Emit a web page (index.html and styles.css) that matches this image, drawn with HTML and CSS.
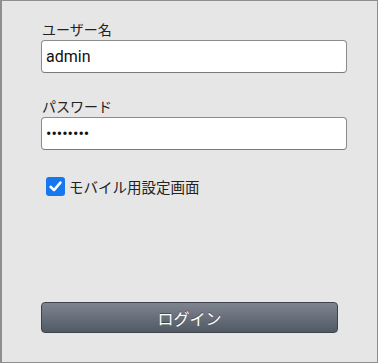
FILE: index.html
```html
<!DOCTYPE html>
<html lang="ja">
<head>
<meta charset="utf-8">
<link rel="stylesheet" href="styles.css">
</head>
<body>
<div class="page">
  <form class="login">
    <label class="field-label" for="user">ユーザー名</label>
    <input class="field" id="user" type="text" value="admin">
    <label class="field-label second" for="pass">パスワード</label>
    <input class="field" id="pass" type="password" value="password">
    <label class="check-row">
      <span class="check" role="checkbox" aria-checked="true">
        <svg width="19" height="19" viewBox="0 0 19 19"><path d="M4.6 9.8 L8 13.1 L14.4 5.6" fill="none" stroke="#fff" stroke-width="2.6" stroke-linecap="round" stroke-linejoin="round"/></svg>
      </span>
      <span class="check-text">モバイル用設定画面</span>
    </label>
    <button class="submit" type="button">ログイン</button>
  </form>
</div>
</body>
</html>
```
FILE: styles.css
```css
html, body {
  margin: 0;
  padding: 0;
}
body {
  font-family: Roboto, "Noto Sans CJK JP", sans-serif;
  color: #222;
}
.page {
  box-sizing: border-box;
  width: 378px;
  height: 363px;
  border: 1px solid #8e8e8e;
  border-left-width: 2px;
  background: #e6e6e6;
  padding: 19px 0 0 39px;
}
.login {
  display: flex;
  flex-direction: column;
  align-items: flex-start;
}
.field-label {
  font-size: 14px;
  line-height: 20px;
  height: 20px;
  padding-left: 1px;
}
.field-label.second {
  margin-top: 24px;
}
.field {
  box-sizing: border-box;
  width: 306px;
  height: 33px;
  margin: 0;
  border: 1px solid #8c8c8c;
  border-bottom-color: #7a7a7a;
  border-radius: 4px;
  background: #fff;
  padding: 0 4px;
  font-family: Roboto, "Noto Sans CJK JP", sans-serif;
  font-size: 16px;
  color: #111;
  outline: none;
}
.check-row {
  display: flex;
  align-items: center;
  margin-top: 27px;
  margin-left: 5px;
  height: 19px;
  font-size: 14.5px;
  line-height: 19px;
}
.check {
  display: block;
  width: 19px;
  height: 19px;
  margin-right: 4px;
  border-radius: 3px;
  background: #1677f0;
}
.check svg {
  display: block;
}
.check-text {
  padding-top: 3px;
}
.submit {
  box-sizing: border-box;
  margin-top: 106px;
  width: 297px;
  height: 31px;
  border: 1px solid #3e434a;
  border-radius: 4px;
  background: linear-gradient(#7e858f, #515964);
  color: #fff;
  font-family: Roboto, "Noto Sans CJK JP", sans-serif;
  font-size: 16px;
  text-shadow: 0 -1px 0 rgba(0,0,0,0.35);
  padding: 0;
}
```
